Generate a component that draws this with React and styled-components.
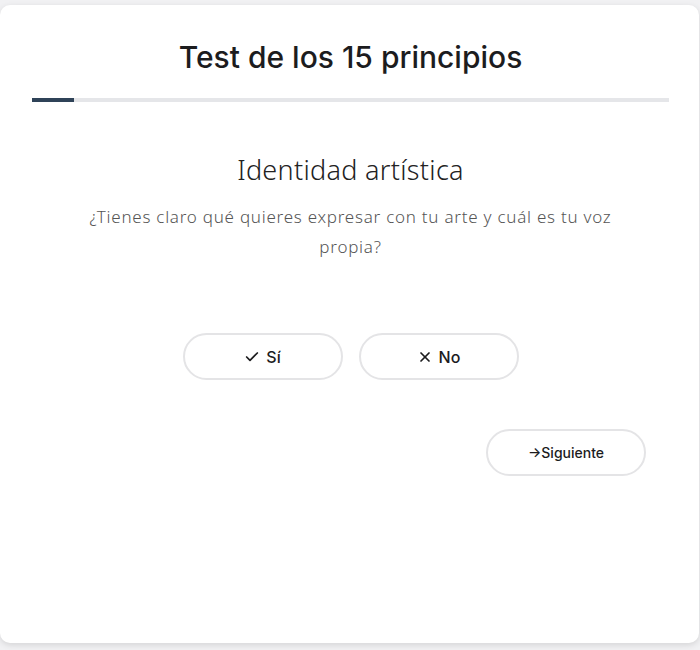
import React from "react";
import styled, { createGlobalStyle } from "styled-components";
import { Check, X } from "lucide-react";

const GlobalStyle = createGlobalStyle`
  html, body {
    margin: 0;
    padding: 0;
    background: #f1f1f3;
  }
  body {
    font-family: "Inter", "Liberation Sans", sans-serif;
  }
`;

const Page = styled.div`
  padding: 5px 1px 7px 0;
`;

const Card = styled.div`
  height: 638px;
  box-sizing: border-box;
  background: #fff;
  border-radius: 10px;
  box-shadow: 0 2px 6px rgba(0, 0, 0, 0.12);
  padding: 34px 30px 0 32px;
  display: flex;
  flex-direction: column;
`;

const Title = styled.h1`
  margin: 0;
  text-align: center;
  font-size: 30px;
  line-height: 36px;
  font-weight: 500;
  color: #1c1c1e;
`;

const Track = styled.div`
  margin-top: 23px;
  height: 4px;
  background: #e5e6e9;
  display: flex;
`;

const Fill = styled.div`
  height: 100%;
  background: #2f4358;
`;

const Question = styled.div`
  margin-top: 52px;
  display: flex;
  flex-direction: column;
  align-items: center;
`;

const Heading = styled.h2`
  margin: 0;
  font-family: "Noto Sans", "Open Sans", sans-serif;
  font-size: 27px;
  line-height: 32px;
  font-weight: 300;
  color: #222;
  letter-spacing: 0.3px;
`;

const Text = styled.p`
  margin: 16px 0 0;
  max-width: 545px;
  text-align: center;
  font-family: "Noto Sans", "Open Sans", sans-serif;
  font-size: 17px;
  line-height: 30px;
  font-weight: 300;
  letter-spacing: 0.75px;
  color: #555;
`;

const Answers = styled.div`
  margin-top: 71px;
  display: flex;
  justify-content: center;
  gap: 16px;
`;

const PillButton = styled.button`
  width: 160px;
  height: 47px;
  box-sizing: border-box;
  border: 2px solid #e4e4e6;
  border-radius: 24px;
  background: #fff;
  display: flex;
  align-items: center;
  justify-content: center;
  gap: 6px;
  font-family: "Inter", "Liberation Sans", sans-serif;
  font-size: ${(p) => (p.small ? "14px" : "16px")};
  font-weight: 500;
  color: #1c1c1e;
  cursor: pointer;
  padding: 0;
`;

const Footer = styled.div`
  margin-top: 49px;
  display: flex;
  justify-content: flex-end;
  padding-right: 23px;
`;

export default function App() {
  const step = 1;
  const total = 15;
  return (
    <>
      <GlobalStyle />
      <Page>
        <Card>
          <Title>Test de los 15 principios</Title>
          <Track>
            <Fill style={{ width: `${(step / total) * 100}%` }} />
          </Track>
          <Question>
            <Heading>Identidad artística</Heading>
            <Text>
              ¿Tienes claro qué quieres expresar con tu arte y cuál es tu voz propia?
            </Text>
          </Question>
          <Answers>
            <PillButton>
              <Check size={16} strokeWidth={2.6} />
              Sí
            </PillButton>
            <PillButton>
              <X size={16} strokeWidth={2.6} />
              No
            </PillButton>
          </Answers>
          <Footer>
            <PillButton small>→Siguiente</PillButton>
          </Footer>
        </Card>
      </Page>
    </>
  );
}
